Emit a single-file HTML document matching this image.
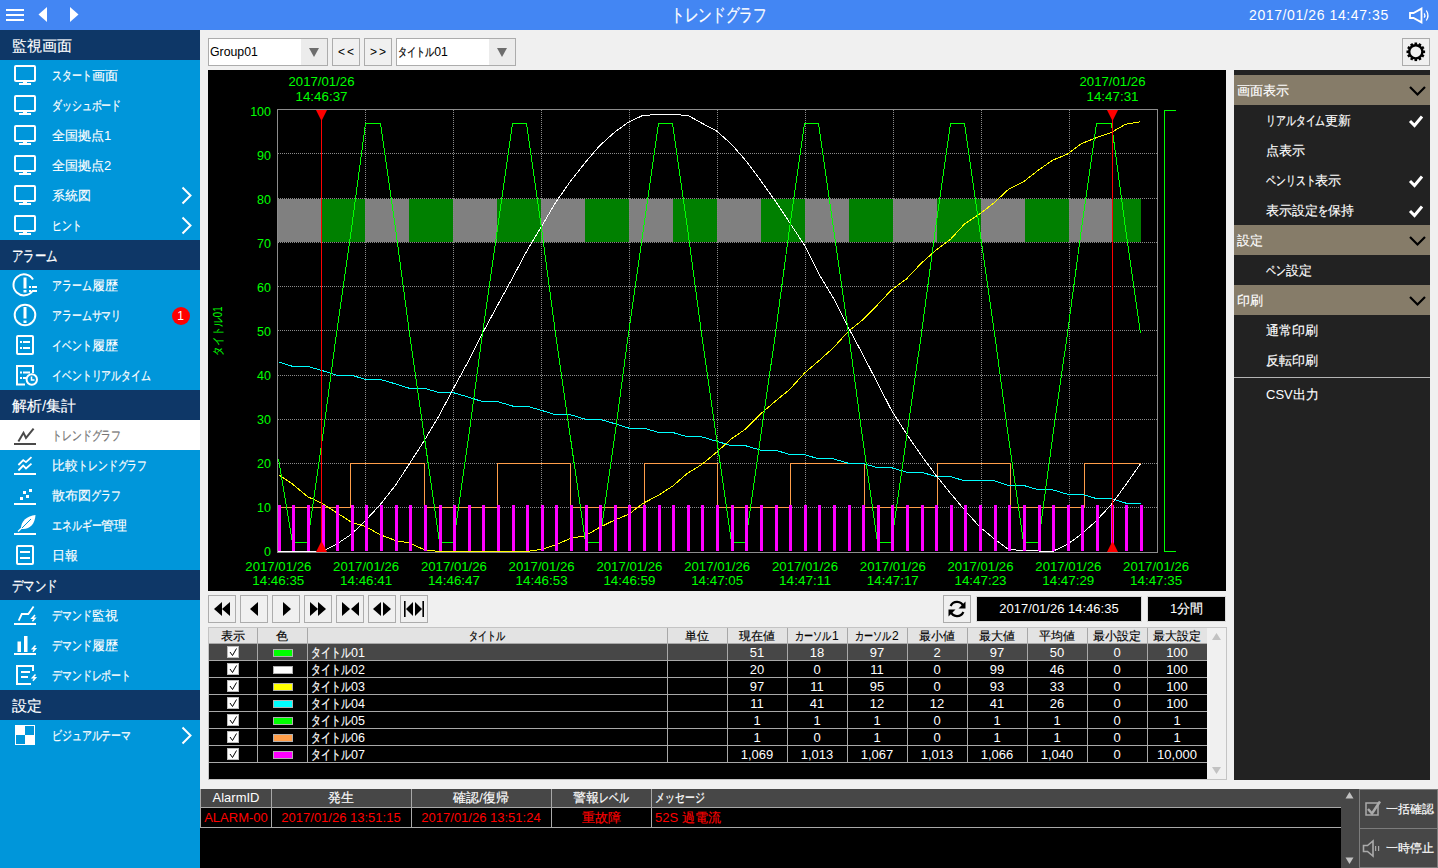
<!DOCTYPE html><html><head><meta charset="utf-8"><style>
*{box-sizing:border-box}
html,body{margin:0;padding:0}
body{width:1438px;height:868px;overflow:hidden;position:relative;background:#f0f0f0;font-family:"Liberation Sans",sans-serif}
.a{position:absolute}
#top{left:0;top:0;width:1438px;height:30px;background:#4386f3;color:#fff}
#side{left:0;top:30px;width:200px;height:838px;background:#0096da;color:#fff}
.hdr{position:absolute;left:0;width:200px;height:30px;background:#0e3767;font-size:15px;line-height:31px;padding-left:12px}
.itm{position:absolute;left:0;width:200px;height:30px;font-size:13px;line-height:32px;padding-left:52px}
.k{display:inline-block;transform:scaleX(.76);transform-origin:0 50%;-webkit-text-stroke:0.25px}
.j{-webkit-text-stroke:0.15px}
.itm svg{position:absolute;left:0;top:0}
.sel{background:#fff;color:#767676}
.itm .chev{position:absolute;left:180px;top:6px}
</style></head><body>
<div id="top" class="a">
<div class="a" style="left:6px;top:9px;width:18px;height:2px;background:#fff"></div>
<div class="a" style="left:6px;top:14px;width:18px;height:2px;background:#fff"></div>
<div class="a" style="left:6px;top:19px;width:18px;height:2px;background:#fff"></div>
<svg class="a" style="left:0;top:0" width="100" height="30"><polygon points="47,7 47,22 38.5,14.5" fill="#fff"/><polygon points="70,7 70,22 78.5,14.5" fill="#fff"/></svg>
<div class="a" style="left:0;top:0;width:1438px;text-align:center;font-size:18px;line-height:30px"><span class="k" style="margin-right:-1.68em">トレンドグラフ</span></div>
<div class="a" style="left:1249px;top:0;font-size:14px;line-height:31px;letter-spacing:0.6px">2017/01/26 14:47:35</div>
<svg class="a" style="left:1405px;top:4px" width="28" height="22"><path d="M5,9 H8.5 L16.5,4.6 V18.4 L8.5,14 H5 Z" fill="none" stroke="#fff" stroke-width="1.8" stroke-linejoin="miter"/><path d="M19.2,9.3 Q20.6,11.5 19.2,13.7" fill="none" stroke="#fff" stroke-width="1.3"/><path d="M21.3,6.5 Q24.6,11.5 21.3,16.5" fill="none" stroke="#fff" stroke-width="1.3"/></svg>
</div>
<div id="side" class="a">
<div class="hdr" style="top:0px"><span class="j">監視画面</span></div>
<div class="itm" style="top:30px"><svg width="40" height="30"><rect x="15" y="6" width="20" height="15" rx="1" fill="none" stroke="#fff" stroke-width="2"/><rect x="23" y="22" width="4" height="1" fill="#fff"/><rect x="19" y="23" width="12" height="2" fill="#fff"/></svg><span><span class="k" style="margin-right:-0.96em">スタート</span><span class="j">画面</span></span></div>
<div class="itm" style="top:60px"><svg width="40" height="30"><rect x="15" y="6" width="20" height="15" rx="1" fill="none" stroke="#fff" stroke-width="2"/><rect x="23" y="22" width="4" height="1" fill="#fff"/><rect x="19" y="23" width="12" height="2" fill="#fff"/></svg><span><span class="k" style="margin-right:-1.68em">ダッシュボード</span></span></div>
<div class="itm" style="top:90px"><svg width="40" height="30"><rect x="15" y="6" width="20" height="15" rx="1" fill="none" stroke="#fff" stroke-width="2"/><rect x="23" y="22" width="4" height="1" fill="#fff"/><rect x="19" y="23" width="12" height="2" fill="#fff"/></svg><span><span class="j">全国拠点</span>1</span></div>
<div class="itm" style="top:120px"><svg width="40" height="30"><rect x="15" y="6" width="20" height="15" rx="1" fill="none" stroke="#fff" stroke-width="2"/><rect x="23" y="22" width="4" height="1" fill="#fff"/><rect x="19" y="23" width="12" height="2" fill="#fff"/></svg><span><span class="j">全国拠点</span>2</span></div>
<div class="itm" style="top:150px"><svg width="40" height="30"><rect x="15" y="6" width="20" height="15" rx="1" fill="none" stroke="#fff" stroke-width="2"/><rect x="23" y="22" width="4" height="1" fill="#fff"/><rect x="19" y="23" width="12" height="2" fill="#fff"/></svg><span><span class="j">系統図</span></span><svg class="chev" width="14" height="20"><path d="M2.5,1.5 L10.5,9.5 L2.5,17.5" fill="none" stroke="#fff" stroke-width="2"/></svg></div>
<div class="itm" style="top:180px"><svg width="40" height="30"><rect x="15" y="6" width="20" height="15" rx="1" fill="none" stroke="#fff" stroke-width="2"/><rect x="23" y="22" width="4" height="1" fill="#fff"/><rect x="19" y="23" width="12" height="2" fill="#fff"/></svg><span><span class="k" style="margin-right:-0.72em">ヒント</span></span><svg class="chev" width="14" height="20"><path d="M2.5,1.5 L10.5,9.5 L2.5,17.5" fill="none" stroke="#fff" stroke-width="2"/></svg></div>
<div class="hdr" style="top:210px"><span class="k" style="margin-right:-0.96em">アラーム</span></div>
<div class="itm" style="top:240px"><svg width="40" height="30"><path d="M33,9.5 A10.5,10.5 0 1 0 32.5,21" fill="none" stroke="#fff" stroke-width="2"/><rect x="23.5" y="7.5" width="3" height="11" fill="#fff"/><rect x="23.5" y="20" width="3" height="2.5" fill="#fff"/><rect x="29" y="16" width="2" height="2" fill="#fff"/><rect x="32" y="16" width="5" height="2" fill="#fff"/><rect x="29" y="20" width="2" height="2" fill="#fff"/><rect x="32" y="20" width="5" height="2" fill="#fff"/></svg><span><span class="k" style="margin-right:-0.96em">アラーム</span><span class="j">履歴</span></span></div>
<div class="itm" style="top:270px"><svg width="40" height="30"><circle cx="25" cy="15" r="10.3" fill="none" stroke="#fff" stroke-width="2"/><rect x="23.5" y="7" width="3" height="11.5" fill="#fff"/><rect x="23.5" y="20.5" width="3" height="2.5" fill="#fff"/></svg><span><span class="k" style="margin-right:-1.68em">アラームサマリ</span></span><div class="a" style="left:171.5px;top:6.5px;width:18px;height:18px;border-radius:9px;background:#ff0000;font-size:12px;line-height:18px;text-align:center;padding:0">1</div></div>
<div class="itm" style="top:300px"><svg width="40" height="30"><rect x="17" y="6" width="16" height="18" rx="1" fill="none" stroke="#fff" stroke-width="2"/><rect x="20" y="11" width="2" height="2" fill="#fff"/><rect x="23" y="11" width="7" height="2" fill="#fff"/><rect x="20" y="17" width="2" height="2" fill="#fff"/><rect x="23" y="17" width="7" height="2" fill="#fff"/></svg><span><span class="k" style="margin-right:-0.96em">イベント</span><span class="j">履歴</span></span></div>
<div class="itm" style="top:330px"><svg width="40" height="30"><path d="M25,24.5 H17 V6 H33 V13" fill="none" stroke="#fff" stroke-width="2"/><rect x="20" y="11.5" width="2" height="2" fill="#fff"/><rect x="23" y="11.5" width="7" height="2" fill="#fff"/><rect x="20" y="17" width="2" height="2" fill="#fff"/><rect x="23" y="17" width="3" height="2" fill="#fff"/><circle cx="31.8" cy="19.5" r="5.2" fill="#0096da" stroke="#fff" stroke-width="2"/><path d="M31.5,16.5 V20 H34.5" fill="none" stroke="#fff" stroke-width="1.5"/></svg><span><span class="k" style="margin-right:-2.40em">イベントリアルタイム</span></span></div>
<div class="hdr" style="top:360px"><span class="j">解析</span>/<span class="j">集計</span></div>
<div class="itm sel" style="top:390px"><svg width="40" height="30"><path d="M18.4,21.4 L23.5,12.8 L26,18 L33.6,8.6" fill="none" stroke="#4a4a4a" stroke-width="2"/><rect x="14" y="23" width="22" height="2" fill="#4a4a4a"/></svg><span><span class="k" style="margin-right:-1.68em">トレンドグラフ</span></span></div>
<div class="itm" style="top:420px"><svg width="40" height="30"><path d="M18.4,15 L23.2,10.1 L26,12.2 L31.5,7.1" fill="none" stroke="#fff" stroke-width="1.8"/><path d="M18.4,20.5 L23.2,15.6 L26,18.4 L31.5,13.6" fill="none" stroke="#fff" stroke-width="1.8"/><rect x="14" y="23" width="22" height="2" fill="#fff"/></svg><span><span class="j">比較</span><span class="k" style="margin-right:-1.68em">トレンドグラフ</span></span></div>
<div class="itm" style="top:450px"><svg width="40" height="30"><rect x="20" y="17" width="3" height="3" fill="#fff"/><rect x="23" y="11" width="3" height="3" fill="#fff"/><rect x="26" y="15" width="3" height="3" fill="#fff"/><rect x="29" y="9" width="3" height="3" fill="#fff"/><rect x="14" y="23" width="22" height="2" fill="#fff"/></svg><span><span class="j">散布図</span><span class="k" style="margin-right:-0.72em">グラフ</span></span></div>
<div class="itm" style="top:480px"><svg width="40" height="30"><path d="M21,18.5 C21,11 27,6 35.5,5 C35,14 30,19.5 22,19 Z" fill="#fff"/><path d="M18,21.5 L30,10" stroke="#fff" stroke-width="1.3"/><path d="M22,18 L31,9" stroke="#0096da" stroke-width="1"/><rect x="14" y="23" width="22" height="2" fill="#fff"/></svg><span><span class="k" style="margin-right:-1.20em">エネルギー</span><span class="j">管理</span></span></div>
<div class="itm" style="top:510px"><svg width="40" height="30"><rect x="17" y="6" width="16" height="18" rx="1" fill="none" stroke="#fff" stroke-width="2"/><rect x="20" y="11" width="10" height="2" fill="#fff"/><rect x="20" y="17" width="10" height="2" fill="#fff"/></svg><span><span class="j">日報</span></span></div>
<div class="hdr" style="top:540px"><span class="k" style="margin-right:-0.96em">デマンド</span></div>
<div class="itm" style="top:570px"><svg width="40" height="30"><path d="M18.7,20.7 L21.8,14 H28.3 L33.6,6.6" fill="none" stroke="#fff" stroke-width="1.8"/><path d="M35,15 l-3,3.2 h3 l-2.6,3" fill="none" stroke="#fff" stroke-width="1.5"/><rect x="14" y="23" width="22" height="2" fill="#fff"/></svg><span><span class="k" style="margin-right:-0.96em">デマンド</span><span class="j">監視</span></span></div>
<div class="itm" style="top:600px"><svg width="40" height="30"><rect x="17.5" y="11.5" width="3.5" height="10.5" fill="#fff"/><rect x="24" y="6" width="3.5" height="16" fill="#fff"/><path d="M35.5,15.5 l-3,3.2 h3 l-2.6,3" fill="none" stroke="#fff" stroke-width="1.5"/><rect x="14" y="23" width="22" height="2" fill="#fff"/></svg><span><span class="k" style="margin-right:-0.96em">デマンド</span><span class="j">履歴</span></span></div>
<div class="itm" style="top:630px"><svg width="40" height="30"><path d="M33,11 V6 H17 V24 H31" fill="none" stroke="#fff" stroke-width="2"/><rect x="21" y="11" width="9" height="2" fill="#fff"/><rect x="21" y="16" width="7" height="2" fill="#fff"/><path d="M35.5,14.5 l-3,3.2 h3 l-2.6,3" fill="none" stroke="#fff" stroke-width="1.5"/></svg><span><span class="k" style="margin-right:-1.92em">デマンドレポート</span></span></div>
<div class="hdr" style="top:660px"><span class="j">設定</span></div>
<div class="itm" style="top:690px"><svg width="40" height="30"><rect x="15.5" y="5.5" width="19" height="19" fill="none" stroke="#fff" stroke-width="1"/><rect x="15" y="5" width="10" height="10" fill="#fff"/><rect x="25" y="15" width="10" height="10" fill="#fff"/></svg><span><span class="k" style="margin-right:-1.92em">ビジュアルテーマ</span></span><svg class="chev" width="14" height="20"><path d="M2.5,1.5 L10.5,9.5 L2.5,17.5" fill="none" stroke="#fff" stroke-width="2"/></svg></div>
</div>
<div class="a" style="left:208px;top:38px;width:120px;height:28px;border:1px solid #acacac;background:#fff;font-size:12.3px;line-height:26px;padding-left:1px;color:#000;white-space:nowrap">Group01<div class="a" style="right:0;top:0;width:26px;height:26px;background:#ececec"><svg width="26" height="26"><polygon points="8,9 18,9 13,18" fill="#6d6d6d"/></svg></div></div>
<div class="a" style="left:332px;top:38px;width:28px;height:28px;border:1px solid #acacac;background:#f0f0f0;font-size:12px;line-height:26px;text-align:center;color:#000;letter-spacing:2px;padding-left:2px">&lt;&lt;</div>
<div class="a" style="left:364px;top:38px;width:28px;height:28px;border:1px solid #acacac;background:#f0f0f0;font-size:12px;line-height:26px;text-align:center;color:#000;letter-spacing:2px;padding-left:2px">&gt;&gt;</div>
<div class="a" style="left:396px;top:38px;width:120px;height:28px;border:1px solid #acacac;background:#fff;font-size:12.3px;line-height:26px;padding-left:1px;color:#000;white-space:nowrap"><span class="k" style="margin-right:-0.96em">タイトル</span>01<div class="a" style="right:0;top:0;width:26px;height:26px;background:#ececec"><svg width="26" height="26"><polygon points="8,9 18,9 13,18" fill="#6d6d6d"/></svg></div></div>
<div class="a" style="left:1402px;top:38px;width:28px;height:28px;border:1px solid #acacac;background:#f0f0f0"><svg width="26" height="26" viewBox="0 0 26 26"><g transform="translate(12.8,12.8)"><circle r="6.6" fill="none" stroke="#000" stroke-width="2.4"/><rect x="-1.3" y="-9.3" width="2.6" height="2.6" fill="#000" transform="rotate(0)"/><rect x="-1.3" y="-9.3" width="2.6" height="2.6" fill="#000" transform="rotate(30)"/><rect x="-1.3" y="-9.3" width="2.6" height="2.6" fill="#000" transform="rotate(60)"/><rect x="-1.3" y="-9.3" width="2.6" height="2.6" fill="#000" transform="rotate(90)"/><rect x="-1.3" y="-9.3" width="2.6" height="2.6" fill="#000" transform="rotate(120)"/><rect x="-1.3" y="-9.3" width="2.6" height="2.6" fill="#000" transform="rotate(150)"/><rect x="-1.3" y="-9.3" width="2.6" height="2.6" fill="#000" transform="rotate(180)"/><rect x="-1.3" y="-9.3" width="2.6" height="2.6" fill="#000" transform="rotate(210)"/><rect x="-1.3" y="-9.3" width="2.6" height="2.6" fill="#000" transform="rotate(240)"/><rect x="-1.3" y="-9.3" width="2.6" height="2.6" fill="#000" transform="rotate(270)"/><rect x="-1.3" y="-9.3" width="2.6" height="2.6" fill="#000" transform="rotate(300)"/><rect x="-1.3" y="-9.3" width="2.6" height="2.6" fill="#000" transform="rotate(330)"/></g></svg></div>
<svg class="a" style="left:208px;top:70px" width="1018" height="521" viewBox="208 70 1018 521" shape-rendering="crispEdges">
<rect x="208" y="70" width="1018" height="521" fill="#000"/>
<rect x="278" y="199" width="43" height="43" fill="#808080"/>
<rect x="321" y="199" width="44" height="43" fill="#008000"/>
<rect x="365" y="199" width="44" height="43" fill="#808080"/>
<rect x="409" y="199" width="44" height="43" fill="#008000"/>
<rect x="453" y="199" width="44" height="43" fill="#808080"/>
<rect x="497" y="199" width="44" height="43" fill="#008000"/>
<rect x="541" y="199" width="44" height="43" fill="#808080"/>
<rect x="585" y="199" width="44" height="43" fill="#008000"/>
<rect x="629" y="199" width="44" height="43" fill="#808080"/>
<rect x="673" y="199" width="44" height="43" fill="#008000"/>
<rect x="717" y="199" width="44" height="43" fill="#808080"/>
<rect x="761" y="199" width="44" height="43" fill="#008000"/>
<rect x="805" y="199" width="44" height="43" fill="#808080"/>
<rect x="849" y="199" width="44" height="43" fill="#008000"/>
<rect x="893" y="199" width="44" height="43" fill="#808080"/>
<rect x="937" y="199" width="44" height="43" fill="#008000"/>
<rect x="981" y="199" width="44" height="43" fill="#808080"/>
<rect x="1025" y="199" width="44" height="43" fill="#008000"/>
<rect x="1069" y="199" width="44" height="43" fill="#808080"/>
<rect x="1113" y="199" width="28" height="43" fill="#008000"/>
<path d="M278,153.5H1157M278,198.5H1157M278,242.5H1157M278,286.5H1157M278,330.5H1157M278,375.5H1157M278,419.5H1157M278,463.5H1157M278,507.5H1157M365.5,110V552M453.5,110V552M541.5,110V552M629.5,110V552M717.5,110V552M805.5,110V552M893.5,110V552M981.5,110V552M1069.5,110V552" stroke="#8a8a8a" stroke-width="1" stroke-dasharray="1,1" fill="none"/>
<rect x="277.5" y="109.5" width="880" height="443" fill="none" stroke="#8c8c8c" stroke-width="1"/>
<g fill="#00ff00" font-size="12.5" font-family="Liberation Sans" shape-rendering="auto"><text x="271" y="556.0" text-anchor="end">0</text><text x="271" y="512.0" text-anchor="end">10</text><text x="271" y="468.0" text-anchor="end">20</text><text x="271" y="424.0" text-anchor="end">30</text><text x="271" y="380.0" text-anchor="end">40</text><text x="271" y="336.0" text-anchor="end">50</text><text x="271" y="292.0" text-anchor="end">60</text><text x="271" y="248.0" text-anchor="end">70</text><text x="271" y="204.0" text-anchor="end">80</text><text x="271" y="160.0" text-anchor="end">90</text><text x="271" y="116.0" text-anchor="end">100</text><text x="278.3" y="570.5" text-anchor="middle" textLength="66" lengthAdjust="spacingAndGlyphs">2017/01/26</text><text x="278.3" y="585" text-anchor="middle" textLength="52" lengthAdjust="spacingAndGlyphs">14:46:35</text><text x="366.1" y="570.5" text-anchor="middle" textLength="66" lengthAdjust="spacingAndGlyphs">2017/01/26</text><text x="366.1" y="585" text-anchor="middle" textLength="52" lengthAdjust="spacingAndGlyphs">14:46:41</text><text x="453.9" y="570.5" text-anchor="middle" textLength="66" lengthAdjust="spacingAndGlyphs">2017/01/26</text><text x="453.9" y="585" text-anchor="middle" textLength="52" lengthAdjust="spacingAndGlyphs">14:46:47</text><text x="541.6" y="570.5" text-anchor="middle" textLength="66" lengthAdjust="spacingAndGlyphs">2017/01/26</text><text x="541.6" y="585" text-anchor="middle" textLength="52" lengthAdjust="spacingAndGlyphs">14:46:53</text><text x="629.4" y="570.5" text-anchor="middle" textLength="66" lengthAdjust="spacingAndGlyphs">2017/01/26</text><text x="629.4" y="585" text-anchor="middle" textLength="52" lengthAdjust="spacingAndGlyphs">14:46:59</text><text x="717.2" y="570.5" text-anchor="middle" textLength="66" lengthAdjust="spacingAndGlyphs">2017/01/26</text><text x="717.2" y="585" text-anchor="middle" textLength="52" lengthAdjust="spacingAndGlyphs">14:47:05</text><text x="805.0" y="570.5" text-anchor="middle" textLength="66" lengthAdjust="spacingAndGlyphs">2017/01/26</text><text x="805.0" y="585" text-anchor="middle" textLength="52" lengthAdjust="spacingAndGlyphs">14:47:11</text><text x="892.8" y="570.5" text-anchor="middle" textLength="66" lengthAdjust="spacingAndGlyphs">2017/01/26</text><text x="892.8" y="585" text-anchor="middle" textLength="52" lengthAdjust="spacingAndGlyphs">14:47:17</text><text x="980.5" y="570.5" text-anchor="middle" textLength="66" lengthAdjust="spacingAndGlyphs">2017/01/26</text><text x="980.5" y="585" text-anchor="middle" textLength="52" lengthAdjust="spacingAndGlyphs">14:47:23</text><text x="1068.3" y="570.5" text-anchor="middle" textLength="66" lengthAdjust="spacingAndGlyphs">2017/01/26</text><text x="1068.3" y="585" text-anchor="middle" textLength="52" lengthAdjust="spacingAndGlyphs">14:47:29</text><text x="1156.1" y="570.5" text-anchor="middle" textLength="66" lengthAdjust="spacingAndGlyphs">2017/01/26</text><text x="1156.1" y="585" text-anchor="middle" textLength="52" lengthAdjust="spacingAndGlyphs">14:47:35</text><text x="321.5" y="86" text-anchor="middle" textLength="66" lengthAdjust="spacingAndGlyphs">2017/01/26</text><text x="321.5" y="101" text-anchor="middle" textLength="52" lengthAdjust="spacingAndGlyphs">14:46:37</text><text x="1112.5" y="86" text-anchor="middle" textLength="66" lengthAdjust="spacingAndGlyphs">2017/01/26</text><text x="1112.5" y="101" text-anchor="middle" textLength="52" lengthAdjust="spacingAndGlyphs">14:47:31</text><text transform="translate(222,331) rotate(-90)" text-anchor="middle" font-size="12" textLength="49" lengthAdjust="spacingAndGlyphs">タイトル01</text></g>
<polyline points="277.5,507.5 350.5,507.5 350.5,463.5 424.5,463.5 424.5,507.5 497.5,507.5 497.5,463.5 570.5,463.5 570.5,507.5 644.5,507.5 644.5,463.5 717.5,463.5 717.5,507.5 790.5,507.5 790.5,463.5 864.5,463.5 864.5,507.5 937.5,507.5 937.5,463.5 1010.5,463.5 1010.5,507.5 1084.5,507.5 1084.5,463.5 1140.5,463.5" fill="none" stroke="#ff9e4a" stroke-width="1" shape-rendering="crispEdges"/>
<polyline points="278.5,361.9 292.5,366.3 307.5,366.3 322.5,370.7 336.5,375.1 351.5,375.1 365.5,379.5 380.5,379.5 395.5,383.9 409.5,388.3 424.5,388.3 439.5,392.7 453.5,392.7 468.5,397.1 482.5,401.6 497.5,401.6 512.5,406.0 526.5,406.0 541.5,410.4 555.5,414.8 570.5,414.8 585.5,419.2 599.5,419.2 614.5,423.6 628.5,428.0 643.5,428.0 658.5,432.4 672.5,432.4 687.5,436.8 701.5,436.8 716.5,441.2 731.5,445.7 745.5,445.7 760.5,450.1 775.5,450.1 789.5,454.5 804.5,454.5 818.5,458.9 833.5,458.9 848.5,463.3 862.5,463.3 877.5,467.7 891.5,467.7 906.5,472.1 921.5,472.1 935.5,476.5 950.5,476.5 964.5,480.9 979.5,480.9 994.5,480.9 1008.5,485.4 1023.5,485.4 1038.5,489.8 1052.5,489.8 1067.5,494.2 1081.5,494.2 1096.5,498.6 1111.5,498.6 1125.5,503.0 1140.5,503.0" fill="none" stroke="#00ffff" stroke-width="1" shape-rendering="crispEdges"/>
<polyline points="278.5,474.7 292.5,484.1 307.5,496.6 322.5,503.5 336.5,512.6 351.5,522.2 365.5,526.5 380.5,534.9 395.5,540.5 409.5,543.1 424.5,549.8 439.5,551.5 453.5,551.5 468.5,551.5 482.5,551.5 497.5,551.5 512.5,551.5 526.5,551.5 541.5,549.3 555.5,545.0 570.5,538.4 585.5,535.7 599.5,527.4 614.5,520.1 628.5,514.4 643.5,503.1 658.5,495.3 672.5,486.2 687.5,473.2 701.5,464.7 716.5,452.3 731.5,438.8 745.5,429.1 760.5,414.0 775.5,401.1 789.5,389.6 804.5,373.1 818.5,361.1 833.5,347.6 848.5,331.2 862.5,320.0 877.5,304.8 891.5,289.9 906.5,278.9 921.5,263.0 935.5,250.5 950.5,239.3 964.5,224.0 979.5,214.1 994.5,202.5 1008.5,189.3 1023.5,181.7 1038.5,170.1 1052.5,160.3 1067.5,154.1 1081.5,143.6 1096.5,137.6 1111.5,132.4 1125.5,124.2 1140.5,121.8" fill="none" stroke="#ffff00" stroke-width="1" shape-rendering="crispEdges"/>
<polyline points="278.5,551.3 292.5,551.5 307.5,551.5 322.5,551.3 336.5,544.3 351.5,534.1 365.5,520.6 380.5,504.3 395.5,485.2 409.5,463.7 424.5,440.2 439.5,414.9 453.5,388.4 468.5,361.0 482.5,333.2 497.5,305.4 512.5,278.0 526.5,251.5 541.5,226.3 555.5,202.7 570.5,181.2 585.5,162.2 599.5,145.8 614.5,132.3 628.5,122.1 643.5,115.1 658.5,114.9 672.5,114.9 687.5,115.1 701.5,123.0 716.5,130.9 731.5,144.2 745.5,160.3 760.5,180.3 775.5,201.3 789.5,222.4 804.5,245.2 818.5,273.2 833.5,298.3 848.5,327.8 862.5,354.0 877.5,383.0 891.5,410.3 906.5,434.0 921.5,455.6 935.5,474.7 950.5,493.3 964.5,509.9 979.5,526.7 994.5,539.0 1008.5,549.4 1023.5,550.6 1038.5,551.0 1052.5,551.5 1067.5,544.3 1081.5,534.1 1096.5,520.6 1111.5,504.3 1125.5,485.2 1140.5,463.7" fill="none" stroke="#ffffff" stroke-width="1" shape-rendering="crispEdges"/>
<polyline points="278.5,458.9 292.5,542.7 307.5,542.7 322.5,437.9 336.5,333.2 351.5,228.5 365.5,123.7 380.5,123.7 395.5,228.5 409.5,333.2 424.5,437.9 439.5,542.7 453.5,542.7 468.5,437.9 482.5,333.2 497.5,228.5 512.5,123.7 526.5,123.7 541.5,228.5 555.5,333.2 570.5,437.9 585.5,542.7 599.5,542.7 614.5,437.9 628.5,333.2 643.5,228.5 658.5,123.7 672.5,123.7 687.5,228.5 701.5,333.2 716.5,437.9 731.5,542.7 745.5,542.7 760.5,437.9 775.5,333.2 789.5,228.5 804.5,123.7 818.5,123.7 833.5,228.5 848.5,333.2 862.5,437.9 877.5,542.7 891.5,542.7 906.5,437.9 921.5,333.2 935.5,228.5 950.5,123.7 964.5,123.7 979.5,228.5 994.5,333.2 1008.5,437.9 1023.5,542.7 1038.5,542.7 1052.5,437.9 1067.5,333.2 1081.5,228.5 1096.5,123.7 1111.5,123.7 1125.5,228.5 1140.5,333.2" fill="none" stroke="#00ff00" stroke-width="1" shape-rendering="crispEdges"/>
<path d="M278,505h3v46h-3zM292,505h3v46h-3zM307,505h3v46h-3zM322,505h3v46h-3zM336,505h3v46h-3zM351,505h3v46h-3zM365,505h3v46h-3zM380,505h3v46h-3zM395,505h3v46h-3zM409,505h3v46h-3zM424,505h3v46h-3zM439,505h3v46h-3zM453,505h3v46h-3zM468,505h3v46h-3zM482,505h3v46h-3zM497,505h3v46h-3zM512,505h3v46h-3zM526,505h3v46h-3zM541,505h3v46h-3zM555,505h3v46h-3zM570,505h3v46h-3zM585,505h3v46h-3zM599,505h3v46h-3zM614,505h3v46h-3zM628,505h3v46h-3zM643,505h3v46h-3zM658,505h3v46h-3zM672,505h3v46h-3zM687,505h3v46h-3zM701,505h3v46h-3zM716,505h3v46h-3zM731,505h3v46h-3zM745,505h3v46h-3zM760,505h3v46h-3zM775,505h3v46h-3zM789,505h3v46h-3zM804,505h3v46h-3zM818,505h3v46h-3zM833,505h3v46h-3zM848,505h3v46h-3zM862,505h3v46h-3zM877,505h3v46h-3zM891,505h3v46h-3zM906,505h3v46h-3zM921,505h3v46h-3zM935,505h3v46h-3zM950,505h3v46h-3zM964,505h3v46h-3zM979,505h3v46h-3zM994,505h3v46h-3zM1008,505h3v46h-3zM1023,505h3v46h-3zM1038,505h3v46h-3zM1052,505h3v46h-3zM1067,505h3v46h-3zM1081,505h3v46h-3zM1096,505h3v46h-3zM1111,505h3v46h-3zM1125,505h3v46h-3zM1140,505h3v46h-3z" fill="#ff00ff"/>
<rect x="321" y="110" width="1" height="441" fill="#ff0000"/>
<polygon points="316.0,110 327.0,110 321.5,121" fill="#ff0000" shape-rendering="auto"/>
<polygon points="316.0,552 327.0,552 321.5,541" fill="#ff0000" shape-rendering="auto"/>
<rect x="1112" y="110" width="1" height="441" fill="#ff0000"/>
<polygon points="1107.0,110 1118.0,110 1112.5,121" fill="#ff0000" shape-rendering="auto"/>
<polygon points="1107.0,552 1118.0,552 1112.5,541" fill="#ff0000" shape-rendering="auto"/>
<path d="M1176,110.5H1164.5V551.5H1176" fill="none" stroke="#00ff00" stroke-width="1"/>
</svg>
<div class="a" style="left:208px;top:595px;width:28px;height:28px;border:1px solid #acacac;background:#f0f0f0"><svg width="26" height="26" fill="#000"><polygon points="13,6 13,20 5,13" /><polygon points="21,6 21,20 13,13"/></svg></div>
<div class="a" style="left:240px;top:595px;width:28px;height:28px;border:1px solid #acacac;background:#f0f0f0"><svg width="26" height="26" fill="#000"><polygon points="17,6 17,20 9,13"/></svg></div>
<div class="a" style="left:272px;top:595px;width:28px;height:28px;border:1px solid #acacac;background:#f0f0f0"><svg width="26" height="26" fill="#000"><polygon points="10,6 10,20 18,13"/></svg></div>
<div class="a" style="left:304px;top:595px;width:28px;height:28px;border:1px solid #acacac;background:#f0f0f0"><svg width="26" height="26" fill="#000"><polygon points="5,6 5,20 13,13"/><polygon points="13,6 13,20 21,13"/></svg></div>
<div class="a" style="left:336px;top:595px;width:28px;height:28px;border:1px solid #acacac;background:#f0f0f0"><svg width="26" height="26" fill="#000"><polygon points="5,6 5,20 13,13"/><polygon points="22,6 22,20 14,13"/></svg></div>
<div class="a" style="left:368px;top:595px;width:28px;height:28px;border:1px solid #acacac;background:#f0f0f0"><svg width="26" height="26" fill="#000"><polygon points="12,6 12,20 4,13"/><polygon points="14,6 14,20 22,13"/></svg></div>
<div class="a" style="left:400px;top:595px;width:28px;height:28px;border:1px solid #acacac;background:#f0f0f0"><svg width="26" height="26" fill="#000"><rect x="3" y="5" width="1.6" height="16"/><polygon points="12,6 12,20 5,13"/><polygon points="14,6 14,20 21,13"/><rect x="21.4" y="5" width="1.6" height="16"/></svg></div>
<div class="a" style="left:943px;top:595px;width:28px;height:28px;border:1px solid #acacac;background:#f0f0f0"><svg width="26" height="26"><path d="M19.5,10.5 A7,7 0 0 0 6.6,10" fill="none" stroke="#000" stroke-width="2.2"/><polygon points="21.5,5.5 21.5,12.5 14.5,12.5" fill="#000"/><path d="M6.5,15.5 A7,7 0 0 0 19.4,16" fill="none" stroke="#000" stroke-width="2.2"/><polygon points="4.5,20.5 4.5,13.5 11.5,13.5" fill="#000"/></svg></div>
<div class="a" style="left:976px;top:596px;width:166px;height:26px;background:#000;border:1px solid #d9d9d9;color:#fff;font-size:13px;line-height:24px;text-align:center">2017/01/26 14:46:35</div>
<div class="a" style="left:1147px;top:596px;width:79px;height:26px;background:#000;border:1px solid #d9d9d9;color:#fff;font-size:13px;line-height:24px;text-align:center">1<span class="j">分間</span></div>
<div class="a" style="left:208px;top:627px;width:1019px;height:153px;border:1px solid #c4c4c4;background:#000"></div>
<div class="a" style="left:209px;top:628px;width:998px;height:16px;background:#e3e3e3"></div>
<div class="a" style="left:1207px;top:628px;width:19px;height:151px;background:#f0f0f0"></div>
<svg class="a" style="left:1207px;top:628px" width="19" height="151"><polygon points="9.5,5 5,12 14,12" fill="#c2c2c2"/><polygon points="9.5,146 5,139 14,139" fill="#c2c2c2"/></svg>
<div class="a" style="left:209px;top:644px;width:998px;height:16px;background:#474747"></div>
<svg class="a" style="left:0;top:0" width="1438" height="868" shape-rendering="crispEdges"><g fill="#a8a8a8"><rect x="257" y="628" width="1" height="134"/><rect x="307" y="628" width="1" height="134"/><rect x="667" y="628" width="1" height="134"/><rect x="727" y="628" width="1" height="134"/><rect x="787" y="628" width="1" height="134"/><rect x="847" y="628" width="1" height="134"/><rect x="907" y="628" width="1" height="134"/><rect x="967" y="628" width="1" height="134"/><rect x="1027" y="628" width="1" height="134"/><rect x="1087" y="628" width="1" height="134"/><rect x="1147" y="628" width="1" height="134"/><rect x="209" y="643" width="998" height="1"/><rect x="209" y="660" width="998" height="1"/><rect x="209" y="677" width="998" height="1"/><rect x="209" y="694" width="998" height="1"/><rect x="209" y="711" width="998" height="1"/><rect x="209" y="728" width="998" height="1"/><rect x="209" y="745" width="998" height="1"/><rect x="209" y="762" width="998" height="1"/></g></svg>
<div class="a" style="left:208px;top:627px;width:49px;height:17px;text-align:center;font-size:12px;line-height:18px;color:#000;white-space:nowrap"><span class="j">表示</span></div>
<div class="a" style="left:257px;top:627px;width:50px;height:17px;text-align:center;font-size:12px;line-height:18px;color:#000;white-space:nowrap"><span class="j">色</span></div>
<div class="a" style="left:307px;top:627px;width:360px;height:17px;text-align:center;font-size:12px;line-height:18px;color:#000;white-space:nowrap"><span class="k" style="margin-right:-0.96em">タイトル</span></div>
<div class="a" style="left:667px;top:627px;width:60px;height:17px;text-align:center;font-size:12px;line-height:18px;color:#000;white-space:nowrap"><span class="j">単位</span></div>
<div class="a" style="left:727px;top:627px;width:60px;height:17px;text-align:center;font-size:12px;line-height:18px;color:#000;white-space:nowrap"><span class="j">現在値</span></div>
<div class="a" style="left:787px;top:627px;width:60px;height:17px;text-align:center;font-size:12px;line-height:18px;color:#000;white-space:nowrap"><span class="k" style="margin-right:-0.96em">カーソル</span>1</div>
<div class="a" style="left:847px;top:627px;width:60px;height:17px;text-align:center;font-size:12px;line-height:18px;color:#000;white-space:nowrap"><span class="k" style="margin-right:-0.96em">カーソル</span>2</div>
<div class="a" style="left:907px;top:627px;width:60px;height:17px;text-align:center;font-size:12px;line-height:18px;color:#000;white-space:nowrap"><span class="j">最小値</span></div>
<div class="a" style="left:967px;top:627px;width:60px;height:17px;text-align:center;font-size:12px;line-height:18px;color:#000;white-space:nowrap"><span class="j">最大値</span></div>
<div class="a" style="left:1027px;top:627px;width:60px;height:17px;text-align:center;font-size:12px;line-height:18px;color:#000;white-space:nowrap"><span class="j">平均値</span></div>
<div class="a" style="left:1087px;top:627px;width:60px;height:17px;text-align:center;font-size:12px;line-height:18px;color:#000;white-space:nowrap"><span class="j">最小設定</span></div>
<div class="a" style="left:1147px;top:627px;width:60px;height:17px;text-align:center;font-size:12px;line-height:18px;color:#000;white-space:nowrap"><span class="j">最大設定</span></div>
<div class="a" style="left:227px;top:646px;width:12px;height:12px;background:#fff;border:1px solid #bbb"><svg width="10" height="10" style="position:absolute;left:0;top:0"><path d="M2,5 L4.5,8.5 L8.5,1.5" fill="none" stroke="#000" stroke-width="1"/></svg></div>
<div class="a" style="left:273px;top:649px;width:20px;height:8px;background:#00ff00;border:1px solid #b0b0b0"></div>
<div class="a" style="left:311px;top:644px;height:17px;font-size:12.5px;line-height:18px;color:#fff;white-space:nowrap"><span class="k" style="margin-right:-0.96em">タイトル</span>01</div>
<div class="a" style="left:727px;top:644px;width:60px;height:17px;text-align:center;font-size:13px;line-height:18px;color:#fff">51</div>
<div class="a" style="left:787px;top:644px;width:60px;height:17px;text-align:center;font-size:13px;line-height:18px;color:#fff">18</div>
<div class="a" style="left:847px;top:644px;width:60px;height:17px;text-align:center;font-size:13px;line-height:18px;color:#fff">97</div>
<div class="a" style="left:907px;top:644px;width:60px;height:17px;text-align:center;font-size:13px;line-height:18px;color:#fff">2</div>
<div class="a" style="left:967px;top:644px;width:60px;height:17px;text-align:center;font-size:13px;line-height:18px;color:#fff">97</div>
<div class="a" style="left:1027px;top:644px;width:60px;height:17px;text-align:center;font-size:13px;line-height:18px;color:#fff">50</div>
<div class="a" style="left:1087px;top:644px;width:60px;height:17px;text-align:center;font-size:13px;line-height:18px;color:#fff">0</div>
<div class="a" style="left:1147px;top:644px;width:60px;height:17px;text-align:center;font-size:13px;line-height:18px;color:#fff">100</div>
<div class="a" style="left:227px;top:663px;width:12px;height:12px;background:#fff;border:1px solid #bbb"><svg width="10" height="10" style="position:absolute;left:0;top:0"><path d="M2,5 L4.5,8.5 L8.5,1.5" fill="none" stroke="#000" stroke-width="1"/></svg></div>
<div class="a" style="left:273px;top:666px;width:20px;height:8px;background:#ffffff;border:1px solid #b0b0b0"></div>
<div class="a" style="left:311px;top:661px;height:17px;font-size:12.5px;line-height:18px;color:#fff;white-space:nowrap"><span class="k" style="margin-right:-0.96em">タイトル</span>02</div>
<div class="a" style="left:727px;top:661px;width:60px;height:17px;text-align:center;font-size:13px;line-height:18px;color:#fff">20</div>
<div class="a" style="left:787px;top:661px;width:60px;height:17px;text-align:center;font-size:13px;line-height:18px;color:#fff">0</div>
<div class="a" style="left:847px;top:661px;width:60px;height:17px;text-align:center;font-size:13px;line-height:18px;color:#fff">11</div>
<div class="a" style="left:907px;top:661px;width:60px;height:17px;text-align:center;font-size:13px;line-height:18px;color:#fff">0</div>
<div class="a" style="left:967px;top:661px;width:60px;height:17px;text-align:center;font-size:13px;line-height:18px;color:#fff">99</div>
<div class="a" style="left:1027px;top:661px;width:60px;height:17px;text-align:center;font-size:13px;line-height:18px;color:#fff">46</div>
<div class="a" style="left:1087px;top:661px;width:60px;height:17px;text-align:center;font-size:13px;line-height:18px;color:#fff">0</div>
<div class="a" style="left:1147px;top:661px;width:60px;height:17px;text-align:center;font-size:13px;line-height:18px;color:#fff">100</div>
<div class="a" style="left:227px;top:680px;width:12px;height:12px;background:#fff;border:1px solid #bbb"><svg width="10" height="10" style="position:absolute;left:0;top:0"><path d="M2,5 L4.5,8.5 L8.5,1.5" fill="none" stroke="#000" stroke-width="1"/></svg></div>
<div class="a" style="left:273px;top:683px;width:20px;height:8px;background:#ffff00;border:1px solid #b0b0b0"></div>
<div class="a" style="left:311px;top:678px;height:17px;font-size:12.5px;line-height:18px;color:#fff;white-space:nowrap"><span class="k" style="margin-right:-0.96em">タイトル</span>03</div>
<div class="a" style="left:727px;top:678px;width:60px;height:17px;text-align:center;font-size:13px;line-height:18px;color:#fff">97</div>
<div class="a" style="left:787px;top:678px;width:60px;height:17px;text-align:center;font-size:13px;line-height:18px;color:#fff">11</div>
<div class="a" style="left:847px;top:678px;width:60px;height:17px;text-align:center;font-size:13px;line-height:18px;color:#fff">95</div>
<div class="a" style="left:907px;top:678px;width:60px;height:17px;text-align:center;font-size:13px;line-height:18px;color:#fff">0</div>
<div class="a" style="left:967px;top:678px;width:60px;height:17px;text-align:center;font-size:13px;line-height:18px;color:#fff">93</div>
<div class="a" style="left:1027px;top:678px;width:60px;height:17px;text-align:center;font-size:13px;line-height:18px;color:#fff">33</div>
<div class="a" style="left:1087px;top:678px;width:60px;height:17px;text-align:center;font-size:13px;line-height:18px;color:#fff">0</div>
<div class="a" style="left:1147px;top:678px;width:60px;height:17px;text-align:center;font-size:13px;line-height:18px;color:#fff">100</div>
<div class="a" style="left:227px;top:697px;width:12px;height:12px;background:#fff;border:1px solid #bbb"><svg width="10" height="10" style="position:absolute;left:0;top:0"><path d="M2,5 L4.5,8.5 L8.5,1.5" fill="none" stroke="#000" stroke-width="1"/></svg></div>
<div class="a" style="left:273px;top:700px;width:20px;height:8px;background:#00ffff;border:1px solid #b0b0b0"></div>
<div class="a" style="left:311px;top:695px;height:17px;font-size:12.5px;line-height:18px;color:#fff;white-space:nowrap"><span class="k" style="margin-right:-0.96em">タイトル</span>04</div>
<div class="a" style="left:727px;top:695px;width:60px;height:17px;text-align:center;font-size:13px;line-height:18px;color:#fff">11</div>
<div class="a" style="left:787px;top:695px;width:60px;height:17px;text-align:center;font-size:13px;line-height:18px;color:#fff">41</div>
<div class="a" style="left:847px;top:695px;width:60px;height:17px;text-align:center;font-size:13px;line-height:18px;color:#fff">12</div>
<div class="a" style="left:907px;top:695px;width:60px;height:17px;text-align:center;font-size:13px;line-height:18px;color:#fff">12</div>
<div class="a" style="left:967px;top:695px;width:60px;height:17px;text-align:center;font-size:13px;line-height:18px;color:#fff">41</div>
<div class="a" style="left:1027px;top:695px;width:60px;height:17px;text-align:center;font-size:13px;line-height:18px;color:#fff">26</div>
<div class="a" style="left:1087px;top:695px;width:60px;height:17px;text-align:center;font-size:13px;line-height:18px;color:#fff">0</div>
<div class="a" style="left:1147px;top:695px;width:60px;height:17px;text-align:center;font-size:13px;line-height:18px;color:#fff">100</div>
<div class="a" style="left:227px;top:714px;width:12px;height:12px;background:#fff;border:1px solid #bbb"><svg width="10" height="10" style="position:absolute;left:0;top:0"><path d="M2,5 L4.5,8.5 L8.5,1.5" fill="none" stroke="#000" stroke-width="1"/></svg></div>
<div class="a" style="left:273px;top:717px;width:20px;height:8px;background:#00ff00;border:1px solid #b0b0b0"></div>
<div class="a" style="left:311px;top:712px;height:17px;font-size:12.5px;line-height:18px;color:#fff;white-space:nowrap"><span class="k" style="margin-right:-0.96em">タイトル</span>05</div>
<div class="a" style="left:727px;top:712px;width:60px;height:17px;text-align:center;font-size:13px;line-height:18px;color:#fff">1</div>
<div class="a" style="left:787px;top:712px;width:60px;height:17px;text-align:center;font-size:13px;line-height:18px;color:#fff">1</div>
<div class="a" style="left:847px;top:712px;width:60px;height:17px;text-align:center;font-size:13px;line-height:18px;color:#fff">1</div>
<div class="a" style="left:907px;top:712px;width:60px;height:17px;text-align:center;font-size:13px;line-height:18px;color:#fff">0</div>
<div class="a" style="left:967px;top:712px;width:60px;height:17px;text-align:center;font-size:13px;line-height:18px;color:#fff">1</div>
<div class="a" style="left:1027px;top:712px;width:60px;height:17px;text-align:center;font-size:13px;line-height:18px;color:#fff">1</div>
<div class="a" style="left:1087px;top:712px;width:60px;height:17px;text-align:center;font-size:13px;line-height:18px;color:#fff">0</div>
<div class="a" style="left:1147px;top:712px;width:60px;height:17px;text-align:center;font-size:13px;line-height:18px;color:#fff">1</div>
<div class="a" style="left:227px;top:731px;width:12px;height:12px;background:#fff;border:1px solid #bbb"><svg width="10" height="10" style="position:absolute;left:0;top:0"><path d="M2,5 L4.5,8.5 L8.5,1.5" fill="none" stroke="#000" stroke-width="1"/></svg></div>
<div class="a" style="left:273px;top:734px;width:20px;height:8px;background:#ff9e4a;border:1px solid #b0b0b0"></div>
<div class="a" style="left:311px;top:729px;height:17px;font-size:12.5px;line-height:18px;color:#fff;white-space:nowrap"><span class="k" style="margin-right:-0.96em">タイトル</span>06</div>
<div class="a" style="left:727px;top:729px;width:60px;height:17px;text-align:center;font-size:13px;line-height:18px;color:#fff">1</div>
<div class="a" style="left:787px;top:729px;width:60px;height:17px;text-align:center;font-size:13px;line-height:18px;color:#fff">0</div>
<div class="a" style="left:847px;top:729px;width:60px;height:17px;text-align:center;font-size:13px;line-height:18px;color:#fff">1</div>
<div class="a" style="left:907px;top:729px;width:60px;height:17px;text-align:center;font-size:13px;line-height:18px;color:#fff">0</div>
<div class="a" style="left:967px;top:729px;width:60px;height:17px;text-align:center;font-size:13px;line-height:18px;color:#fff">1</div>
<div class="a" style="left:1027px;top:729px;width:60px;height:17px;text-align:center;font-size:13px;line-height:18px;color:#fff">1</div>
<div class="a" style="left:1087px;top:729px;width:60px;height:17px;text-align:center;font-size:13px;line-height:18px;color:#fff">0</div>
<div class="a" style="left:1147px;top:729px;width:60px;height:17px;text-align:center;font-size:13px;line-height:18px;color:#fff">1</div>
<div class="a" style="left:227px;top:748px;width:12px;height:12px;background:#fff;border:1px solid #bbb"><svg width="10" height="10" style="position:absolute;left:0;top:0"><path d="M2,5 L4.5,8.5 L8.5,1.5" fill="none" stroke="#000" stroke-width="1"/></svg></div>
<div class="a" style="left:273px;top:751px;width:20px;height:8px;background:#ff00ff;border:1px solid #b0b0b0"></div>
<div class="a" style="left:311px;top:746px;height:17px;font-size:12.5px;line-height:18px;color:#fff;white-space:nowrap"><span class="k" style="margin-right:-0.96em">タイトル</span>07</div>
<div class="a" style="left:727px;top:746px;width:60px;height:17px;text-align:center;font-size:13px;line-height:18px;color:#fff">1,069</div>
<div class="a" style="left:787px;top:746px;width:60px;height:17px;text-align:center;font-size:13px;line-height:18px;color:#fff">1,013</div>
<div class="a" style="left:847px;top:746px;width:60px;height:17px;text-align:center;font-size:13px;line-height:18px;color:#fff">1,067</div>
<div class="a" style="left:907px;top:746px;width:60px;height:17px;text-align:center;font-size:13px;line-height:18px;color:#fff">1,013</div>
<div class="a" style="left:967px;top:746px;width:60px;height:17px;text-align:center;font-size:13px;line-height:18px;color:#fff">1,066</div>
<div class="a" style="left:1027px;top:746px;width:60px;height:17px;text-align:center;font-size:13px;line-height:18px;color:#fff">1,040</div>
<div class="a" style="left:1087px;top:746px;width:60px;height:17px;text-align:center;font-size:13px;line-height:18px;color:#fff">0</div>
<div class="a" style="left:1147px;top:746px;width:60px;height:17px;text-align:center;font-size:13px;line-height:18px;color:#fff">10,000</div>
<div class="a" style="left:1234px;top:70px;width:196px;height:710px;background:#222"></div>
<div class="a" style="left:1234px;top:75px;width:196px;height:30px;background:#867c69;color:#fff;font-size:13px;line-height:32px;padding-left:3px"><span class="j">画面表示</span><svg class="a" style="left:172px;top:8px" width="20" height="14"><path d="M4,4 L11.5,11.5 L19,4" fill="none" stroke="#000" stroke-width="2.2"/></svg></div>
<div class="a" style="left:1234px;top:105px;width:196px;height:30px;color:#fff;font-size:13px;line-height:30px;padding-left:32px;line-height:32px"><span class="k" style="margin-right:-1.44em">リアルタイム</span><span class="j">更新</span><svg class="a" style="left:172px;top:7px" width="20" height="16"><path d="M4,9 L8.5,13.5 L16,4.5" fill="none" stroke="#fff" stroke-width="3"/></svg></div>
<div class="a" style="left:1234px;top:135px;width:196px;height:30px;color:#fff;font-size:13px;line-height:30px;padding-left:32px;line-height:32px"><span class="j">点表示</span></div>
<div class="a" style="left:1234px;top:165px;width:196px;height:30px;color:#fff;font-size:13px;line-height:30px;padding-left:32px;line-height:32px"><span class="k" style="margin-right:-1.20em">ペンリスト</span><span class="j">表示</span><svg class="a" style="left:172px;top:7px" width="20" height="16"><path d="M4,9 L8.5,13.5 L16,4.5" fill="none" stroke="#fff" stroke-width="3"/></svg></div>
<div class="a" style="left:1234px;top:195px;width:196px;height:30px;color:#fff;font-size:13px;line-height:30px;padding-left:32px;line-height:32px"><span class="j">表示設定</span><span class="k" style="margin-right:-0.24em">を</span><span class="j">保持</span><svg class="a" style="left:172px;top:7px" width="20" height="16"><path d="M4,9 L8.5,13.5 L16,4.5" fill="none" stroke="#fff" stroke-width="3"/></svg></div>
<div class="a" style="left:1234px;top:225px;width:196px;height:30px;background:#867c69;color:#fff;font-size:13px;line-height:32px;padding-left:3px"><span class="j">設定</span><svg class="a" style="left:172px;top:8px" width="20" height="14"><path d="M4,4 L11.5,11.5 L19,4" fill="none" stroke="#000" stroke-width="2.2"/></svg></div>
<div class="a" style="left:1234px;top:255px;width:196px;height:30px;color:#fff;font-size:13px;line-height:30px;padding-left:32px;line-height:32px"><span class="k" style="margin-right:-0.48em">ペン</span><span class="j">設定</span></div>
<div class="a" style="left:1234px;top:285px;width:196px;height:30px;background:#867c69;color:#fff;font-size:13px;line-height:32px;padding-left:3px"><span class="j">印刷</span><svg class="a" style="left:172px;top:8px" width="20" height="14"><path d="M4,4 L11.5,11.5 L19,4" fill="none" stroke="#000" stroke-width="2.2"/></svg></div>
<div class="a" style="left:1234px;top:315px;width:196px;height:30px;color:#fff;font-size:13px;line-height:30px;padding-left:32px;line-height:32px"><span class="j">通常印刷</span></div>
<div class="a" style="left:1234px;top:345px;width:196px;height:30px;color:#fff;font-size:13px;line-height:30px;padding-left:32px;line-height:32px"><span class="j">反転印刷</span></div>
<div class="a" style="left:1234px;top:377px;width:196px;height:1px;background:#b4b4b4"></div>
<div class="a" style="left:1234px;top:379px;width:196px;height:30px;color:#fff;font-size:13px;line-height:30px;padding-left:32px;line-height:32px">CSV<span class="j">出力</span></div>
<div class="a" style="left:200px;top:789px;width:1238px;height:79px;background:#000"></div>
<div class="a" style="left:201px;top:789px;width:1140px;height:18px;background:#474747"></div>
<svg class="a" style="left:0;top:0" width="1438" height="868" shape-rendering="crispEdges"><g fill="#a8a8a8"><rect x="271" y="789" width="1" height="38"/><rect x="411" y="789" width="1" height="38"/><rect x="551" y="789" width="1" height="38"/><rect x="651" y="789" width="1" height="38"/><rect x="201" y="807" width="1140" height="1"/><rect x="201" y="827" width="1140" height="1"/><rect x="200" y="789" width="1" height="39"/></g></svg>
<div class="a" style="left:201px;top:789px;width:70px;height:18px;text-align:center;font-size:13px;line-height:18px;color:#fff;white-space:nowrap">AlarmID</div>
<div class="a" style="left:201px;top:808px;width:70px;height:19px;text-align:center;font-size:13px;line-height:20px;color:#ff0000;white-space:nowrap">ALARM-00</div>
<div class="a" style="left:271px;top:789px;width:140px;height:18px;text-align:center;font-size:13px;line-height:18px;color:#fff;white-space:nowrap"><span class="j">発生</span></div>
<div class="a" style="left:271px;top:808px;width:140px;height:19px;text-align:center;font-size:13px;line-height:20px;color:#ff0000;white-space:nowrap">2017/01/26 13:51:15</div>
<div class="a" style="left:411px;top:789px;width:140px;height:18px;text-align:center;font-size:13px;line-height:18px;color:#fff;white-space:nowrap"><span class="j">確認</span>/<span class="j">復帰</span></div>
<div class="a" style="left:411px;top:808px;width:140px;height:19px;text-align:center;font-size:13px;line-height:20px;color:#ff0000;white-space:nowrap">2017/01/26 13:51:24</div>
<div class="a" style="left:551px;top:789px;width:100px;height:18px;text-align:center;font-size:13px;line-height:18px;color:#fff;white-space:nowrap"><span class="j">警報</span><span class="k" style="margin-right:-0.72em">レベル</span></div>
<div class="a" style="left:551px;top:808px;width:100px;height:19px;text-align:center;font-size:13px;line-height:20px;color:#ff0000;white-space:nowrap"><span class="j">重故障</span></div>
<div class="a" style="left:655px;top:789px;height:18px;font-size:13px;line-height:18px;color:#fff;white-space:nowrap"><span class="k" style="margin-right:-1.20em">メッセージ</span></div>
<div class="a" style="left:655px;top:808px;height:19px;font-size:13px;line-height:20px;color:#ff0000;white-space:nowrap">52S <span class="j">過電流</span></div>
<div class="a" style="left:1341px;top:789px;width:18px;height:79px;background:#474747"><svg width="18" height="79"><polygon points="8.5,3 4.5,9.5 12.5,9.5" fill="#c2c2c2"/><polygon points="8.5,75 4.5,68.5 12.5,68.5" fill="#c2c2c2"/></svg></div>
<div class="a" style="left:1359px;top:789px;width:79px;height:40px;background:#474747;border:1px solid #7c7c7c;color:#fff;font-size:12px;line-height:38px;padding-left:26px"><span class="j">一括確認</span><svg class="a" style="left:4px;top:9px" width="20" height="20"><rect x="2" y="4" width="12" height="12" fill="none" stroke="#aaa" stroke-width="1.5"/><path d="M4,10 L8,14.5 L16,2.5" fill="none" stroke="#aaa" stroke-width="2.5"/></svg></div>
<div class="a" style="left:1359px;top:828px;width:79px;height:40px;background:#474747;border:1px solid #7c7c7c;color:#fff;font-size:12px;line-height:38px;padding-left:26px"><span class="j">一時停止</span><svg class="a" style="left:2px;top:10px" width="22" height="20"><path d="M1.5,6.5 H5.5 L11,2 V17 L5.5,12.5 H1.5 Z" fill="none" stroke="#aaa" stroke-width="1.6"/><rect x="13" y="7" width="1.2" height="5" fill="#aaa"/><rect x="16" y="7" width="1.2" height="5" fill="#aaa"/></svg></div>
</body></html>
